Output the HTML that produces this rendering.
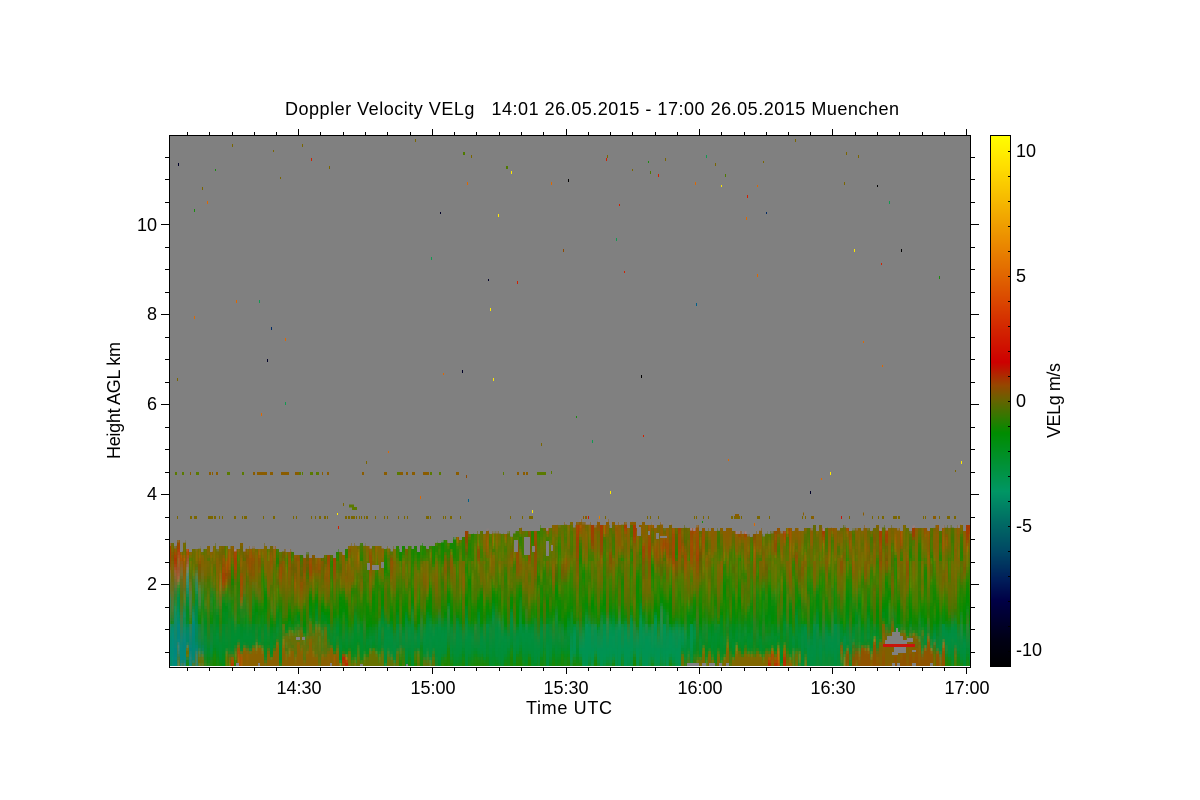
<!DOCTYPE html>
<html>
<head>
<meta charset="utf-8">
<title>Doppler Velocity</title>
<style>
html,body{margin:0;padding:0;background:#fff;width:1200px;height:800px;overflow:hidden}
svg{display:block}
text{font-family:"Liberation Sans",sans-serif;font-size:18px;fill:#000}
</style>
</head>
<body>
<svg width="1200" height="800" viewBox="0 0 1200 800" xmlns="http://www.w3.org/2000/svg">
<defs>
<linearGradient id="base" gradientUnits="userSpaceOnUse" x1="0" y1="500" x2="0" y2="700">
<stop offset="0" stop-color="#8a5c00"/>
<stop offset=".15" stop-color="#856000"/>
<stop offset=".3" stop-color="#6c7000"/>
<stop offset=".42" stop-color="#3c8000"/>
<stop offset=".5" stop-color="#148800"/>
<stop offset=".58" stop-color="#008c00"/>
<stop offset=".6" stop-color="#008c14"/>
<stop offset=".68" stop-color="#008e30"/>
<stop offset=".75" stop-color="#008d20"/>
<stop offset=".8" stop-color="#0a8a00"/>
<stop offset=".83" stop-color="#1c8600"/>
<stop offset="1" stop-color="#1c8600"/>
</linearGradient>
<linearGradient id="cb" gradientUnits="userSpaceOnUse" x1="0" y1="135" x2="0" y2="667">
<stop offset="0" stop-color="#ffff00"/>
<stop offset=".056" stop-color="#ffe000"/>
<stop offset=".2" stop-color="#eb8c00"/>
<stop offset=".267" stop-color="#e16400"/>
<stop offset=".368" stop-color="#d22300"/>
<stop offset=".427" stop-color="#cd0000"/>
<stop offset=".47" stop-color="#964600"/>
<stop offset=".5" stop-color="#646400"/>
<stop offset=".56" stop-color="#008c00"/>
<stop offset=".67" stop-color="#009664"/>
<stop offset=".73" stop-color="#006a64"/>
<stop offset=".785" stop-color="#004664"/>
<stop offset=".835" stop-color="#001e5a"/>
<stop offset=".875" stop-color="#000046"/>
<stop offset=".95" stop-color="#000014"/>
<stop offset="1" stop-color="#000000"/>
</linearGradient>
<linearGradient id="fadeGreen" gradientUnits="userSpaceOnUse" x1="0" y1="525" x2="0" y2="625">
<stop offset="0" stop-color="#fff" stop-opacity=".35"/>
<stop offset=".35" stop-color="#fff" stop-opacity=".8"/>
<stop offset="1" stop-color="#fff" stop-opacity="1"/>
</linearGradient>
<linearGradient id="fadeBrown" gradientUnits="userSpaceOnUse" x1="0" y1="560" x2="0" y2="650">
<stop offset="0" stop-color="#fff" stop-opacity=".9"/>
<stop offset=".6" stop-color="#fff" stop-opacity=".55"/>
<stop offset="1" stop-color="#fff" stop-opacity="0"/>
</linearGradient>
<linearGradient id="fadeRed" gradientUnits="userSpaceOnUse" x1="0" y1="525" x2="0" y2="600">
<stop offset="0" stop-color="#fff" stop-opacity=".9"/>
<stop offset="1" stop-color="#fff" stop-opacity="0"/>
</linearGradient>
<clipPath id="plot"><rect x="170" y="136" width="800" height="530"/></clipPath>
<filter id="pixel" filterUnits="userSpaceOnUse" x="168" y="135" width="804" height="534" color-interpolation-filters="sRGB">
<feFlood x="169" y="136" width="1" height="1" flood-color="#000"/>
<feComposite x="168" y="135" width="3" height="3"/>
<feTile x="168" y="135" width="804" height="534" result="a"/>
<feComposite in="SourceGraphic" in2="a" operator="in"/>
<feMorphology operator="dilate" radius="1"/>
</filter>
<filter id="streak" filterUnits="userSpaceOnUse" x="120" y="460" width="900" height="260" color-interpolation-filters="sRGB">
<feTurbulence type="fractalNoise" baseFrequency="0.3 0.014" numOctaves="3" seed="11" result="t"/>
<feDisplacementMap in="SourceGraphic" in2="t" scale="52" xChannelSelector="G" yChannelSelector="R"/>
</filter>
<filter id="jag" filterUnits="userSpaceOnUse" x="120" y="120" width="900" height="460" color-interpolation-filters="sRGB">
<feTurbulence type="fractalNoise" baseFrequency="0.3 0.002" numOctaves="2" seed="4" result="t"/>
<feDisplacementMap in="SourceGraphic" in2="t" scale="18" xChannelSelector="A" yChannelSelector="R"/>
</filter>
<filter id="gs" filterUnits="userSpaceOnUse" x="150" y="500" width="840" height="180" color-interpolation-filters="sRGB">
<feTurbulence type="fractalNoise" baseFrequency="0.33 0.018" numOctaves="3" seed="21"/>
<feColorMatrix type="matrix" values="0 0 0 0 0  0 0 0 0 .55  0 0 0 0 0  4 0 0 0 -1.75" result="n"/>
<feComposite in="n" in2="SourceGraphic" operator="in"/>
</filter>
<filter id="bs" filterUnits="userSpaceOnUse" x="150" y="500" width="840" height="180" color-interpolation-filters="sRGB">
<feTurbulence type="fractalNoise" baseFrequency="0.3 0.016" numOctaves="3" seed="33"/>
<feColorMatrix type="matrix" values="0 0 0 0 .5  0 0 0 0 .38  0 0 0 0 0  4 0 0 0 -1.8" result="n"/>
<feComposite in="n" in2="SourceGraphic" operator="in"/>
</filter>
<filter id="rs" filterUnits="userSpaceOnUse" x="150" y="500" width="840" height="180" color-interpolation-filters="sRGB">
<feTurbulence type="fractalNoise" baseFrequency="0.35 0.022" numOctaves="2" seed="47"/>
<feColorMatrix type="matrix" values="0 0 0 0 .68  0 0 0 0 .2  0 0 0 0 0  9 0 0 0 -5.2" result="n"/>
<feComposite in="n" in2="SourceGraphic" operator="in"/>
</filter>
<filter id="b6"><feGaussianBlur stdDeviation="6"/></filter>
<filter id="b3"><feGaussianBlur stdDeviation="3"/></filter>
</defs>

<rect width="1200" height="800" fill="#fff"/>

<g clip-path="url(#plot)">
  <rect x="170" y="136" width="800" height="530" fill="#808080"/>
  <g filter="url(#pixel)">
    <g filter="url(#streak)">
      <rect x="130" y="490" width="880" height="220" fill="url(#base)"/>
      <g filter="url(#b6)">
        <path d="M150 535H350V600H150Z" fill="#8f5a00" opacity=".6"/>
        <path d="M340 530H560V592H340Z" fill="#8f6000" opacity=".5"/>
        <path d="M560 510H975V560H560Z" fill="#8f5a00" opacity=".45"/>
        <path d="M570 555H975V600H570Z" fill="#707000" opacity=".3"/>
        <path d="M395 530H478V566H395Z" fill="#1c8600" opacity=".9"/>
        <path d="M500 525H560V552H500Z" fill="#3a8000" opacity=".85"/>
        <path d="M560 565H640V610H560Z" fill="#1c8800" opacity=".5"/>
        <path d="M172 545H186V572H172Z" fill="#c41e00"/>
        <path d="M222 552H240V590H222Z" fill="#b83000" opacity=".8"/>
        <path d="M280 556H340V580H280Z" fill="#a84000" opacity=".6"/>
        <path d="M660 535H700V565H660Z" fill="#b03a00" opacity=".7"/>
        <path d="M162 575H192V680H162Z" fill="#00907a"/>
        <path d="M192 590H260V660H192Z" fill="#008c30" opacity=".6"/>
        <path d="M172 625H198V672H172Z" fill="#00857e" opacity=".9"/>
        <path d="M380 622H560V662H380Z" fill="#009048" opacity=".6"/>
        <path d="M570 622H690V668H570Z" fill="#009458" opacity=".9"/>
        <path d="M800 630H850V680H800Z" fill="#009058" opacity=".6"/>
        <path d="M925 628H975V662H925Z" fill="#009050" opacity=".6"/>
        <path d="M740 590H860V625H740Z" fill="#008c10" opacity=".6"/>
      </g>
      <g filter="url(#b3)">
        <path d="M235 650H332V690H235Z" fill="#8a6000"/>
        <path d="M332 654H400V690H332Z" fill="#7a6a00" opacity=".8"/>
        <path d="M284 630H326V648H284Z" fill="#7a6a00" opacity=".85"/>
        <path d="M692 654H800V690H692Z" fill="#806600"/>
        <path d="M850 648H945V690H850Z" fill="#8f5200"/>
        <path d="M880 632H920V660H880Z" fill="#806000"/>
        <path d="M335 655H345V675H335Z" fill="#c01800"/>
        <path d="M768 660H782V675H768Z" fill="#b82800"/>
        <path d="M235 655H245V675H235Z" fill="#b83000"/>
        <path d="M185 655H200V672H185Z" fill="#6a7000"/>
        <path d="M420 656H440V675H420Z" fill="#806600" opacity=".7"/>
      </g>
    </g>
    <rect x="160" y="525" width="820" height="100" fill="url(#fadeGreen)" filter="url(#gs)"/>
    <rect x="160" y="560" width="820" height="90" fill="url(#fadeBrown)" filter="url(#bs)"/>
    <rect x="160" y="525" width="820" height="75" fill="url(#fadeRed)" filter="url(#rs)"/>
    <g filter="url(#jag)">
      <path fill="#808080" d="M120 120H1020V527L970 527 797 529 770 532 743 534 733 530 670 527 650 524 570 523 557 525 537 530 517 530 513 534 493 532 467 532 460 539 437 542 427 547 380 547 360 543 348 547 343 553 327 555 303 558 290 550 270 548 240 547 223 547 185 550 177 542 170 545 120 545Z"/>
    </g>
  </g>
  <!-- holes -->
  <g fill="#808080" shape-rendering="crispEdges">
    <path d="M514 540h4v12h-4zM524 537h6v18h-6zM532 546h3v6h-3zM546 541h3v15h-3zM551 545h2v6h-2zM367 563h3v7h-3zM372 565h7v5h-7zM381 562h3v6h-3zM637 527h4v9h-4zM648 531h2v4h-2zM656 533h3v6h-3zM660 536h7v2h-7z"/>
    <path d="M896 628h2v4h-2zM892 632h8v4h-8zM887 636h16v4h-16zM885 640h22v4h-22zM894 647h12v6h-12zM892 652h6v3h-6zM907 638h6v4h-6zM912 650h4v2h-4z"/>
    <path d="M687 663h12v3h-12zM702 663h4v3h-4zM709 663h6v3h-6zM719 663h3v3h-3zM726 663h3v3h-3zM892 663h3v3h-3zM897 663h3v3h-3zM912 663h4v3h-4zM930 663h3v3h-3zM236 663h3v3h-3zM258 663h2v3h-2zM330 663h2v3h-2zM360 664h3v2h-3zM406 664h2v2h-2zM296 637h4v3h-4zM302 637h3v3h-3z"/>
  </g>
  <path d="M883 645.5h32" stroke="#c8140a" stroke-width="3" fill="none" shape-rendering="crispEdges"/>

  <!-- 4.5 km and 3.5 km clutter rows -->
  <g fill="none" stroke-width="3" shape-rendering="crispEdges">
    <path stroke="#8a5c00" d="M190 473.5h1M197 473.5h2M209 473.5h2M212 473.5h1M216 473.5h2M253 473.5h2M257 473.5h10M270 473.5h3M281 473.5h8M295 473.5h4M322 473.5h1M327 473.5h2M362 473.5h2M384 473.5h3M400 473.5h3M406 473.5h2M412 473.5h3M423 473.5h6M456 473.5h3M517 473.5h2M523 473.5h2M526 473.5h2"/>
    <path stroke="#5a7a00" d="M175 473.5h2M182 473.5h2M196 473.5h3M227 473.5h3M242 473.5h2M299 473.5h2M302 473.5h1M310 473.5h3M316 473.5h3M397 473.5h3M430 473.5h2M439 473.5h2M503 473.5h1M537 473.5h9M551 472.5h1"/>
    <path stroke="#7a6600" d="M177 517.5h1M190 517.5h2M194 517.5h3M208 517.5h5M214 517.5h2M219 517.5h1M222 517.5h1M234 517.5h2M242 517.5h1M244 517.5h3M263 517.5h1M273 517.5h2M293 517.5h1M296 517.5h1M311 517.5h1M315 517.5h1M319 517.5h2M324 517.5h2M327 517.5h1M345 517.5h2M348 517.5h2M351 517.5h4M356 517.5h1M359 517.5h1M361 517.5h1M364 517.5h1M366 517.5h2M375 517.5h1M384 517.5h1M387 517.5h1M398 517.5h1M404 517.5h1M407 517.5h1M426 517.5h3M430 517.5h1M443 517.5h1M445 517.5h1M450 517.5h2M460 517.5h1M510 517.5h1M522 517.5h1M529 517.5h4"/>
    <path stroke="#7a6600" d="M583 517.5h1M585 517.5h2M605 517.5h1M647 517.5h1M650 517.5h1M658 517.5h1M694 517.5h1M696 517.5h1M703 517.5h1M708 517.5h1M731 517.5h2M734 517.5h6M741 517.5h1M757 517.5h3M769 517.5h1M802 517.5h1M805 517.5h1M811 517.5h2M849 517.5h1M872 517.5h1M878 517.5h1M882 517.5h2M893 517.5h4M898 517.5h2M923 517.5h1M925 517.5h1M933 517.5h3M939 517.5h1M947 517.5h3M954 517.5h2"/>
    <path stroke="#8a5c00" d="M583 517.5h1M585 517.5h2M735 515.5h4M812 517.5h2M803 514h1M863 514h1M933 517.5h3"/>
    <path stroke="#c8140a" d="M588 517.5h1M841 517.5h1"/>
    <path stroke="#e08000" d="M599 517.5h1"/>
    <path stroke="#5a7a00" d="M349 506h5M352 508.5h5"/>
  </g>

  <!-- sparse speckles -->
  <g fill="none" stroke-width="1" shape-rendering="crispEdges" transform="translate(.5 0)">
    <path stroke="#7a6600" d="M232 144v3M273 150v2M302 144v3M415 139v3M471 155v3M329 166v3M280 177v2M202 187v3M607 155v3M665 158v3M715 163v3M763 161v2M632 169v2M795 139v3M846 152v3M858 155v3M844 182v3M177 378v3M366 461v3M955 470v2M541 443v3M343 503v3"/>
    <path stroke="#4f7a00" d="M463 152v3M464 152v3M506 166v3M507 166v3M650 171v3M725 174v3"/>
    <path stroke="#000028" d="M178 163v3M440 212v2M488 279v2M267 359v3M462 370v3M810 491v3"/>
    <path stroke="#002a66" d="M271 327v3M766 212v2"/>
    <path stroke="#000000" d="M568 179v3M877 185v2M901 249v3M641 375v3"/>
    <path stroke="#ffea00" d="M511 171v3M498 214v3M490 308v3M493 378v3M721 185v2M854 249v3M610 491v3M830 472v3M961 461v3M532 510v3M337 513v2"/>
    <path stroke="#d22000" d="M311 158v3M517 281v3M606 158v3M658 174v3M747 195v3M619 204v2M881 263v2M624 271v2M643 435v2M338 526v3"/>
    <path stroke="#e06800" d="M467 182v3M551 182v3M207 201v3M236 300v3M194 316v3M285 338v3M443 373v2M261 413v3M695 182v3M757 185v2M746 217v3M757 274v3M863 341v2M882 365v2M388 451v2M420 496v3M728 459v2M821 478v2M754 523v3"/>
    <path stroke="#8f4a00" d="M563 249v3M466 475v3"/>
    <path stroke="#119a50" d="M431 257v3M259 300v3M285 402v3M706 155v3M889 201v3M616 238v3M592 440v3"/>
    <path stroke="#1a8c10" d="M215 169v2M648 161v2M939 276v3M576 416v2M702 521v2M194 209v3"/>
    <path stroke="#00608a" d="M696 303v3M468 499v3"/>
  </g>
</g>

<!-- plot frame & ticks -->
<g fill="none" stroke="#000" stroke-width="1" shape-rendering="crispEdges">
  <rect x="169.5" y="135.5" width="801" height="532"/>
  <path d="M161 224.5h8M161 314.5h8M161 404.5h8M161 494.5h8M161 584.5h8M165 157.5h4M165 179.5h4M165 202.5h4M165 247.5h4M165 269.5h4M165 292.5h4M165 337.5h4M165 359.5h4M165 382.5h4M165 427.5h4M165 449.5h4M165 472.5h4M165 517.5h4M165 539.5h4M165 562.5h4M165 607.5h4M165 629.5h4M165 652.5h4"/>
  <path d="M971 224.5h8M971 314.5h8M971 404.5h8M971 494.5h8M971 584.5h8M971 157.5h4M971 179.5h4M971 202.5h4M971 247.5h4M971 269.5h4M971 292.5h4M971 337.5h4M971 359.5h4M971 382.5h4M971 427.5h4M971 449.5h4M971 472.5h4M971 517.5h4M971 539.5h4M971 562.5h4M971 607.5h4M971 629.5h4M971 652.5h4"/>
  <path d="M298.5 129v6M432.5 129v6M566.5 129v6M699.5 129v6M832.5 129v6M966.5 129v6M187.5 132v3M209.5 132v3M232.5 132v3M254.5 132v3M276.5 132v3M320.5 132v3M343.5 132v3M365.5 132v3M387.5 132v3M410.5 132v3M454.5 132v3M476.5 132v3M499.5 132v3M521.5 132v3M543.5 132v3M588.5 132v3M610.5 132v3M632.5 132v3M655.5 132v3M677.5 132v3M721.5 132v3M744.5 132v3M766.5 132v3M788.5 132v3M810.5 132v3M855.5 132v3M877.5 132v3M899.5 132v3M922.5 132v3M944.5 132v3"/>
  <path d="M298.5 668v6M432.5 668v6M566.5 668v6M699.5 668v6M832.5 668v6M966.5 668v6M187.5 668v3M209.5 668v3M232.5 668v3M254.5 668v3M276.5 668v3M320.5 668v3M343.5 668v3M365.5 668v3M387.5 668v3M410.5 668v3M454.5 668v3M476.5 668v3M499.5 668v3M521.5 668v3M543.5 668v3M588.5 668v3M610.5 668v3M632.5 668v3M655.5 668v3M677.5 668v3M721.5 668v3M744.5 668v3M766.5 668v3M788.5 668v3M810.5 668v3M855.5 668v3M877.5 668v3M899.5 668v3M922.5 668v3M944.5 668v3"/>
</g>

<!-- colour bar -->
<rect x="990" y="135" width="21" height="532" fill="url(#cb)"/>
<g fill="none" stroke="#000" stroke-width="1" shape-rendering="crispEdges">
  <rect x="990.5" y="135.5" width="20" height="531"/>
  <path d="M1008 151.5h2M1008 176.5h2M1008 201.5h2M1008 226.5h2M1008 251.5h2M1008 276.5h2M1008 301.5h2M1008 326.5h2M1008 351.5h2M1008 376.5h2M1008 401.5h2M1008 426.5h2M1008 451.5h2M1008 476.5h2M1008 501.5h2M1008 526.5h2M1008 551.5h2M1008 576.5h2M1008 601.5h2M1008 626.5h2M1008 651.5h2"/>
</g>

<!-- text -->
<text x="285" y="115" xml:space="preserve" textLength="614" lengthAdjust="spacing">Doppler Velocity VELg   14:01 26.05.2015 - 17:00 26.05.2015 Muenchen</text>

<g text-anchor="middle">
  <text x="299" y="694">14:30</text>
  <text x="433" y="694">15:00</text>
  <text x="566" y="694">15:30</text>
  <text x="700" y="694">16:00</text>
  <text x="833" y="694">16:30</text>
  <text x="967" y="694">17:00</text>
</g>
<text x="526" y="714" textLength="86" lengthAdjust="spacing">Time UTC</text>

<g text-anchor="end">
  <text x="157" y="231">10</text>
  <text x="157" y="320">8</text>
  <text x="157" y="410">6</text>
  <text x="157" y="500">4</text>
  <text x="157" y="590">2</text>
</g>

<text transform="translate(120 459) rotate(-90)" textLength="117" lengthAdjust="spacing">Height AGL km</text>

<text x="1016" y="157">10</text>
<text x="1016" y="282">5</text>
<text x="1016" y="407">0</text>
<text x="1016" y="532">-5</text>
<text x="1016" y="656">-10</text>

<text transform="translate(1060 438) rotate(-90)" textLength="75" lengthAdjust="spacing">VELg m/s</text>
</svg>
</body>
</html>
